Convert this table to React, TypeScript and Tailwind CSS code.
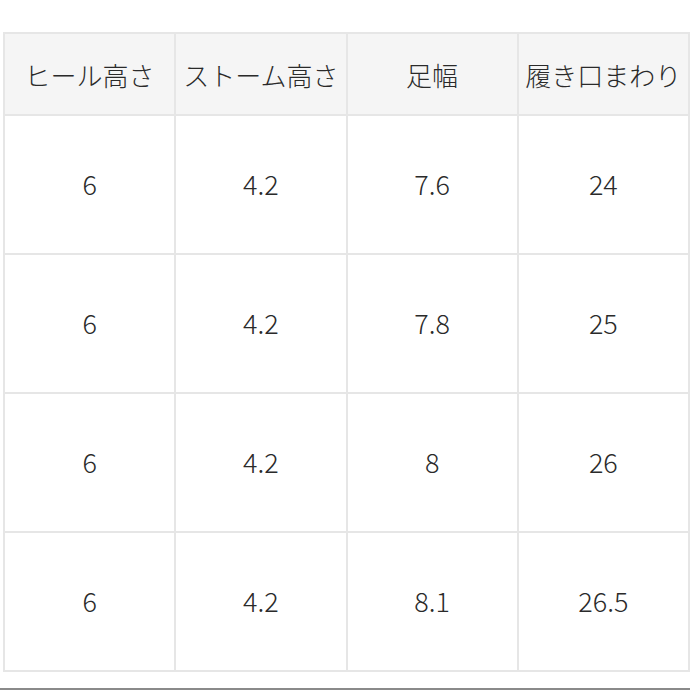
import React from "react";

const headers = ["ヒール高さ", "ストーム高さ", "足幅", "履き口まわり"];
const rows = [
  ["6", "4.2", "7.6", "24"],
  ["6", "4.2", "7.8", "25"],
  ["6", "4.2", "8", "26"],
  ["6", "4.2", "8.1", "26.5"],
];

export default function App() {
  return (
    <div
      className="w-[690px] h-[690px] bg-white overflow-hidden flex flex-col"
      style={{ fontFamily: '"Noto Sans CJK JP", "Noto Sans", sans-serif' }}
    >
      <div className="pt-[32px] pl-[3px]">
        <div className="w-[687px] grid grid-cols-4 border-t-2 border-l-2 border-[#e6e6e6]">
          {headers.map((h) => (
            <div
              key={h}
              className="h-[82px] flex items-center justify-center bg-[#f5f5f5] border-r-2 border-b-2 border-[#e6e6e6] text-[26px] font-light text-[#2a2a2a] whitespace-nowrap"
            >
              {h}
            </div>
          ))}
          {rows.map((r, i) =>
            r.map((c, j) => (
              <div
                key={i + "-" + j}
                className="h-[139px] flex items-center justify-center bg-white border-r-2 border-b-2 border-[#e6e6e6] text-[27px] font-light text-[#2a2a2a]"
              >
                {c}
              </div>
            ))
          )}
        </div>
      </div>
      <div className="flex-1" />
      <div className="h-[2px] bg-[#8a8a8a]" />
    </div>
  );
}
